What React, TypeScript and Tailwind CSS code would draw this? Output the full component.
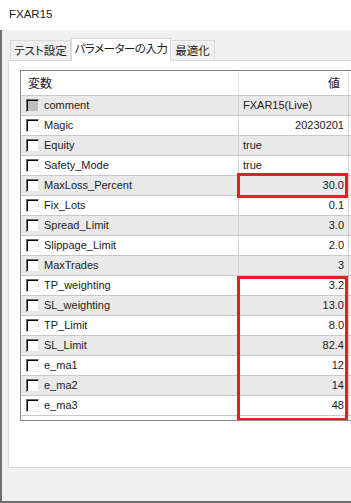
import React from "react";

type Row = {
	name: string;
	value: string;
	left?: boolean;
	disabled?: boolean;
};

const rows: Row[] = [
	{ name: "comment", value: "FXAR15(Live)", left: true, disabled: true },
	{ name: "Magic", value: "20230201" },
	{ name: "Equity", value: "true", left: true },
	{ name: "Safety_Mode", value: "true", left: true },
	{ name: "MaxLoss_Percent", value: "30.0" },
	{ name: "Fix_Lots", value: "0.1" },
	{ name: "Spread_Limit", value: "3.0" },
	{ name: "Slippage_Limit", value: "2.0" },
	{ name: "MaxTrades", value: "3" },
	{ name: "TP_weighting", value: "3.2" },
	{ name: "SL_weighting", value: "13.0" },
	{ name: "TP_Limit", value: "8.0" },
	{ name: "SL_Limit", value: "82.4" },
	{ name: "e_ma1", value: "12" },
	{ name: "e_ma2", value: "14" },
	{ name: "e_ma3", value: "48" },
];

const latin = "font-['Liberation_Sans','Noto_Sans_CJK_JP',sans-serif]";
const jp =
	"font-['Noto_Sans_CJK_JP','Noto_Sans',sans-serif] [font-feature-settings:'palt']";

const CheckBox: React.FC<{ disabled?: boolean }> = ({ disabled }) => (
	<span className="w-[13px] h-[13px] border border-t-[#6b6b6b] border-l-[#6b6b6b] border-r-[#e6e6e6] border-b-[#e6e6e6] shrink-0">
		<span
			className={`block w-full h-full border-t border-l border-t-black border-l-black ${
				disabled ? "bg-[#bdbdbd]" : "bg-white"
			}`}
		/>
	</span>
);

export default function App() {
	return (
		<div className="w-[351px] h-[503px] overflow-hidden bg-[#f0f0f0] flex flex-col text-[#1a1a1a]">
			<div className={`h-[30px] shrink-0 bg-white flex items-center pl-[9px] text-[11.5px] ${latin}`}>
				FXAR15
			</div>
			<div className="flex-1 border-l-2 border-b-2 border-[#707070] pl-[6px] pt-[8px]">
				{/* tabs */}
				<div className={`h-[22px] flex items-end pl-[2px] text-[11.5px] whitespace-nowrap ${jp}`}>
					<div className="w-[61px] h-[20px] border border-b-0 border-[#d9d9d9] flex items-center justify-center pt-[1px]">
						テスト設定
					</div>
					<div className="w-[100px] h-[23px] -mb-px relative z-10 bg-white border border-b-0 border-[#d9d9d9] flex items-center justify-center pb-[2px] tracking-[-0.5px]">
						パラメーターの入力
					</div>
					<div className="w-[44px] h-[20px] border border-l-0 border-b-0 border-[#d9d9d9] flex items-center justify-center pt-[1px]">
						最適化
					</div>
				</div>
				{/* panel */}
				<div className="w-[360px] h-[408px] border border-[#d9d9d9] bg-white pl-[11px] pt-[9px]">
					<div className="relative w-[340px] h-[351px] border border-[#828790] bg-white overflow-hidden">
						<div className={`flex h-[25px] border-b border-[#c8c8c8] text-[12px] ${jp}`}>
							<div className="w-[218px] border-r border-[#e3e3e3] flex items-center pl-[7px]">
								変数
							</div>
							<div className="w-[110px] border-r border-[#e3e3e3] flex items-center justify-end pr-[8px]">
								値
							</div>
							<div className="flex-1" />
						</div>
						{rows.map((r, i) => (
							<div
								key={r.name}
								className={`flex h-[20px] border-b border-[#c8c8c8] text-[11px] ${latin} ${
									i % 2 === 0 ? "bg-[#e9e9e9]" : "bg-white"
								}`}
							>
								<div className="w-[218px] border-r border-[#d2d2d2] flex items-center pl-[5px] gap-[5px]">
									<CheckBox disabled={r.disabled} />
									<span>{r.name}</span>
								</div>
								<div
									className={`w-[110px] border-r border-[#d2d2d2] flex items-center px-[4px] ${
										r.left ? "justify-start" : "justify-end"
									}`}
								>
									{r.value}
								</div>
								<div className="flex-1" />
							</div>
						))}
						{/* highlights */}
						<div className="absolute left-[216px] top-[102px] w-[111px] h-[25px] border-[3px] border-[#ec1c24]" />
						<div className="absolute left-[216px] top-[205px] w-[111px] h-[145px] border-[3px] border-[#ec1c24]" />
					</div>
				</div>
			</div>
		</div>
	);
}
